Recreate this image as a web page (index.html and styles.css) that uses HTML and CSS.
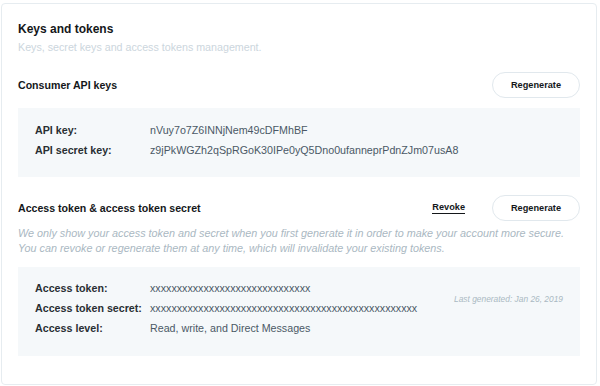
FILE: index.html
```html
<!DOCTYPE html>
<html lang="en">
<head>
    <meta charset="UTF-8">
    <meta name="viewport" content="width=device-width, initial-scale=1.0">
    <title>Keys and tokens</title>
    <link rel="stylesheet" href="styles.css">
</head>
<body>
    <div class="card">
        <h1>Keys and tokens</h1>
        <p class="subtitle">Keys, secret keys and access tokens management.</p>

        <div class="section-head first">
            <h2>Consumer API keys</h2>
            <div class="actions">
                <button class="btn">Regenerate</button>
            </div>
        </div>
        <div class="keys-box consumer">
            <div class="row"><span class="label">API key:</span><span class="value">nVuy7o7Z6INNjNem49cDFMhBF</span></div>
            <div class="row"><span class="label">API secret key:</span><span class="value">z9jPkWGZh2qSpRGoK30IPe0yQ5Dno0ufanneprPdnZJm07usA8</span></div>
        </div>

        <div class="section-head">
            <h2>Access token &amp; access token secret</h2>
            <div class="actions">
                <a class="revoke" href="#">Revoke</a>
                <button class="btn">Regenerate</button>
            </div>
        </div>
        <p class="note">We only show your access token and secret when you first generate it in order to make your account more secure.<br>You can revoke or regenerate them at any time, which will invalidate your existing tokens.</p>
        <div class="keys-box access">
            <div class="rows">
                <div class="row"><span class="label">Access token:</span><span class="value">xxxxxxxxxxxxxxxxxxxxxxxxxxxxxx</span></div>
                <div class="row"><span class="label">Access token secret:</span><span class="value">xxxxxxxxxxxxxxxxxxxxxxxxxxxxxxxxxxxxxxxxxxxxxxxxxx</span></div>
                <div class="row"><span class="label">Access level:</span><span class="value">Read, write, and Direct Messages</span></div>
            </div>
            <span class="generated">Last generated: Jan 26, 2019</span>
        </div>
    </div>
</body>
</html>
```

FILE: styles.css
```css
body {
    margin: 0;
    padding: 3px 3px 0 1px;
    font-family: "Liberation Sans", Arial, sans-serif;
    color: #14171a;
    background: #fff;
}
.card {
    border: 1px solid #e6ecf0;
    border-radius: 4px;
    padding: 16px 16px 0 16px;
    height: 382px;
    box-sizing: border-box;
}
h1 {
    margin: 0;
    font-size: 12px;
    font-weight: bold;
    line-height: 18px;
}
.subtitle {
    margin: 1px 0 0;
    font-size: 10.7px;
    color: #ccd6dd;
    line-height: 16px;
}
.section-head {
    display: flex;
    align-items: center;
    justify-content: space-between;
    margin-top: 18px;
}
.section-head.first {
    margin-top: 17px;
}
h2 {
    margin: 0;
    font-size: 10.6px;
    font-weight: bold;
}
.actions {
    display: flex;
    align-items: center;
    gap: 27px;
}
.btn {
    font-family: inherit;
    font-size: 9.2px;
    font-weight: bold;
    color: #14171a;
    background: #fff;
    border: 1px solid #e1e8ed;
    border-radius: 14px;
    width: 88px;
    height: 26px;
    cursor: pointer;
}
.revoke {
    font-size: 9.2px;
    font-weight: bold;
    color: #14171a;
    text-decoration: none;
    border-bottom: 1px solid #14171a;
    padding-bottom: 1px;
}
.keys-box {
    background: #f5f8fa;
    margin-top: 10px;
    padding: 12px 17px 17px 17px;
    font-size: 10.7px;
}
.keys-box.access {
    display: flex;
    align-items: center;
    justify-content: space-between;
    margin-top: 11px;
    padding: 11px 17px 18px 17px;
}
.row {
    display: flex;
    line-height: 20px;
}
.label {
    width: 115px;
    font-weight: bold;
    color: #292f33;
}
.value {
    color: #4b5866;
}
.note {
    margin: 5px 0 0;
    font-size: 10.8px;
    font-style: italic;
    color: #aab8c2;
    line-height: 15px;
}
.generated {
    font-size: 8.4px;
    font-style: italic;
    color: #aab8c2;
    white-space: nowrap;
    margin-bottom: 18px;
}
```
